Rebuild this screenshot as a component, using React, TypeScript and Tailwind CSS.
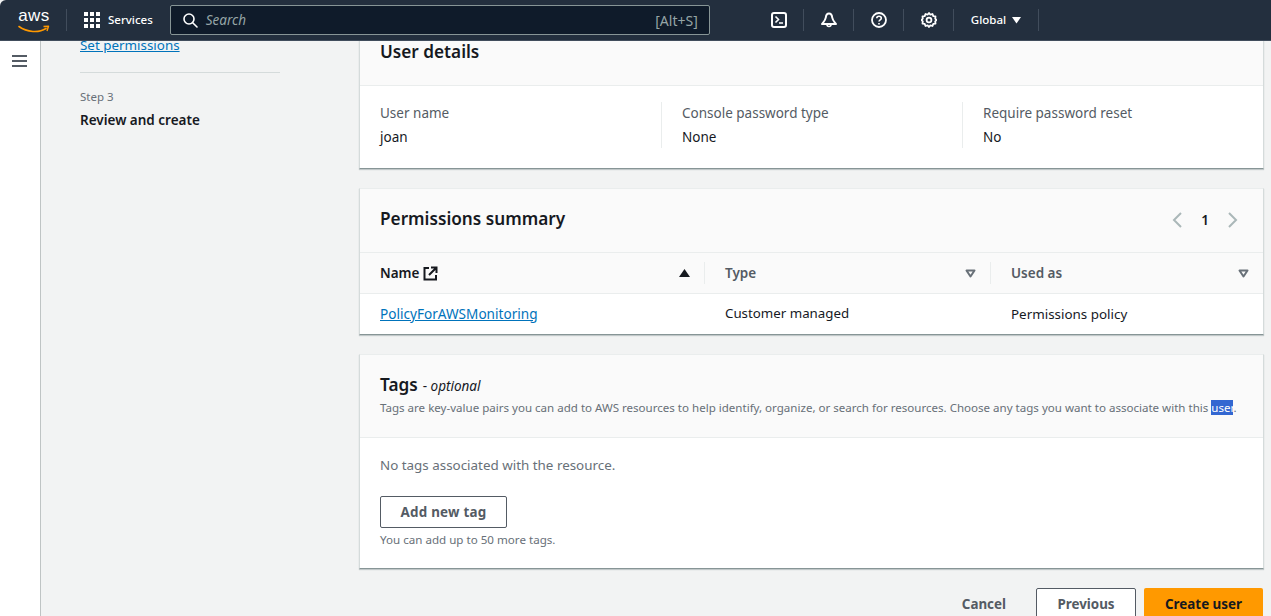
import React from "react";

function Divider() {
  return <div className="h-[22px] w-px bg-[#414d5c]" />;
}

function AwsLogo() {
  return (
    <div className="relative flex h-[30px] w-[32px] flex-col items-center">
      <span className="font-['Liberation_Sans',sans-serif] text-[17px] leading-[20px] tracking-[0.5px] text-white">aws</span>
      <svg width="32" height="9" viewBox="0 0 32 9" className="-mt-[1px]">
        <path d="M1 1.5C9 7.5 21 8 28 3.5" fill="none" stroke="#f90" strokeWidth="1.6" strokeLinecap="round" />
        <path d="M25.5 1.5L30.5 1.2L29 6" fill="none" stroke="#f90" strokeWidth="1.4" strokeLinejoin="round" />
      </svg>
    </div>
  );
}

function GridIcon() {
  return (
    <div className="grid h-4 w-4 grid-cols-3 gap-[1.5px]">
      {Array.from({ length: 9 }).map((_, i) => (
        <div key={i} className="h-[4.3px] w-[4.3px] bg-white" />
      ))}
    </div>
  );
}

function TopNav() {
  return (
    <header className="relative z-10 flex h-[41px] shrink-0 items-center rounded-tl-[6px] border-b border-[#414d5c] bg-[#232f3e] font-['Noto_Sans',sans-serif] text-white">
      <div className="ml-[18px] mr-[16px] mt-[1px]">
        <AwsLogo />
      </div>
      <Divider />
      <div className="ml-[17px] flex items-center gap-2">
        <GridIcon />
        <span className="text-[11.5px] font-medium leading-4">Services</span>
      </div>
      <div className="ml-[17px] flex h-[30px] w-[540px] items-center rounded-[2px] border border-[#879596] bg-[#0f1b2a] pl-[11px] pr-[11px]">
        <svg width="16" height="16" viewBox="0 0 16 16" fill="none" stroke="#fff" strokeWidth="1.6">
          <circle cx="7" cy="7" r="5" />
          <path d="M10.7 10.7L15 15" strokeLinecap="round" />
        </svg>
        <span className="ml-2 text-[13.5px] italic text-[#95a5a6]">Search</span>
        <span className="ml-auto text-[14px] text-[#95a5a6]">[Alt+S]</span>
      </div>
      <div className="ml-[61px] flex h-4 w-4 items-center justify-center">
        <svg width="16" height="16" viewBox="0 0 16 16" fill="none" stroke="#fff" strokeWidth="2">
          <rect x="1" y="1" width="14" height="14" rx="2" />
          <path d="M4.5 4.5L7.5 7.5L4.5 10.5M8 11h4" strokeWidth="1.6" />
        </svg>
      </div>
      <div className="ml-[16px]"><Divider /></div>
      <div className="ml-[17px] flex h-4 w-4 items-center justify-center">
        <svg width="16" height="16" viewBox="0 0 16 16" fill="none" stroke="#fff" strokeWidth="2" strokeLinejoin="round">
          <path d="M8 1.5C5.8 1.5 5 3.5 4.8 5.5C4.5 8 3 9.5 1 12H15C13 9.5 11.5 8 11.2 5.5C11 3.5 10.2 1.5 8 1.5Z" />
          <path d="M6 12.5a2 2 0 0 0 4 0" strokeWidth="1.6" />
        </svg>
      </div>
      <div className="ml-[16px]"><Divider /></div>
      <div className="ml-[17px] flex h-4 w-4 items-center justify-center">
        <svg width="16" height="16" viewBox="0 0 16 16" fill="none" stroke="#fff" strokeWidth="1.8">
          <circle cx="8" cy="8" r="7" />
          <path d="M5.8 6.2C5.8 3.5 10.3 3.5 10.3 6.2C10.3 7.9 8 7.8 8 9.6" strokeWidth="1.6" />
          <path d="M8 11v1.6" strokeWidth="1.6" />
        </svg>
      </div>
      <div className="ml-[16px]"><Divider /></div>
      <div className="ml-[17px] flex h-4 w-4 items-center justify-center">
        <svg width="16" height="16" viewBox="0 0 16 16" fill="none" stroke="#fff" strokeWidth="1.8" strokeLinejoin="round">
          <path d="M8 1L9.4 2.7L11.5 2L12.3 4.1L14.5 4.4L14.2 6.6L15.6 8L14.2 9.4L14.5 11.6L12.3 11.9L11.5 14L9.4 13.3L8 15L6.6 13.3L4.5 14L3.7 11.9L1.5 11.6L1.8 9.4L0.4 8L1.8 6.6L1.5 4.4L3.7 4.1L4.5 2L6.6 2.7Z" />
          <circle cx="8" cy="8" r="2.4" />
        </svg>
      </div>
      <div className="ml-[16px]"><Divider /></div>
      <div className="ml-[17px] flex items-center gap-[6px]">
        <span className="text-[11.5px] font-medium leading-4">Global</span>
        <svg width="9" height="7" viewBox="0 0 9 7" fill="#fff"><path d="M0 0H9L4.5 6.5Z" /></svg>
      </div>
      <div className="ml-[17px]"><Divider /></div>
    </header>
  );
}

function KeyValue({ label, value, className }: { label: string; value: string; className: string }) {
  return (
    <div className={className}>
      <div className="text-[13.5px] leading-[22px] text-[#545b64]">{label}</div>
      <div className="mt-[2px] text-[13.5px] leading-[22px] text-[#16191f]">{value}</div>
    </div>
  );
}

function Card({ children }: { children: React.ReactNode }) {
  return (
    <section className="border border-x-[#d5dbdb] border-t-[#eaeded] border-b-[#879596] bg-white shadow-[0_1px_1px_rgba(0,28,36,0.2)]">
      {children}
    </section>
  );
}

function SortDown() {
  return (
    <svg width="11" height="9" viewBox="0 0 11 9" fill="none" stroke="#687078" strokeWidth="2" strokeLinejoin="round">
      <path d="M1.5 1.5H9.5L5.5 7.5Z" />
    </svg>
  );
}

function UserDetails() {
  return (
    <Card>
      <div className="flex h-[65px] items-end border-b border-[#eaeded] bg-[#fafafa] px-5 pb-[21px]">
        <h2 className="text-[17.2px] font-semibold leading-[24px] text-[#16191f]">User details</h2>
      </div>
      <div className="flex h-[82px] pt-4">
        <div className="flex h-[46px] w-full">
          <KeyValue label="User name" value="joan" className="w-[302px] border-r border-[#eaeded] pl-5" />
          <KeyValue label="Console password type" value="None" className="w-[301px] border-r border-[#eaeded] pl-5" />
          <KeyValue label="Require password reset" value="No" className="flex-1 pl-5" />
        </div>
      </div>
    </Card>
  );
}

function PermissionsSummary() {
  return (
    <Card>
      <div className="flex h-[63px] items-center justify-between bg-[#fafafa] px-5 pb-[4px]">
        <h2 className="text-[17.2px] font-semibold leading-[24px] text-[#16191f]">Permissions summary</h2>
        <div className="flex items-center gap-[18px] pr-[4px] pt-[3px]">
          <svg width="12" height="16" viewBox="0 0 12 16" fill="none" stroke="#aab7b8" strokeWidth="2"><path d="M10 1L3 8L10 15" /></svg>
          <span className="text-[13.5px] font-semibold text-[#16191f]">1</span>
          <svg width="12" height="16" viewBox="0 0 12 16" fill="none" stroke="#aab7b8" strokeWidth="2"><path d="M2 1L9 8L2 15" /></svg>
        </div>
      </div>
      <div className="flex h-[42px] items-center border-y border-[#eaeded] bg-[#fafafa] text-[13.5px] font-semibold">
        <div className="flex h-[22px] w-[345px] items-center border-r border-[#eaeded] pl-5 pr-[14px]">
          <span className="text-[#16191f]">Name</span>
          <svg className="ml-[4px]" width="15" height="15" viewBox="0 0 15 15" fill="none" stroke="#16191f" strokeWidth="2">
            <path d="M6 2H1.5V13.5H13V9" />
            <path d="M8 1.5H13.5V7M13.5 1.5L6 9" />
          </svg>
          <svg className="ml-auto" width="11" height="8" viewBox="0 0 11 8" fill="#16191f"><path d="M5.5 0L11 8H0Z" /></svg>
        </div>
        <div className="flex h-[22px] w-[286px] items-center justify-between border-r border-[#eaeded] pl-5 pr-[14px] text-[#545b64]">
          <span>Type</span>
          <SortDown />
        </div>
        <div className="flex h-[22px] flex-1 items-center justify-between pl-5 pr-[14px] text-[#545b64]">
          <span>Used as</span>
          <SortDown />
        </div>
      </div>
      <div className="flex h-[40px] items-center text-[13.5px] text-[#16191f]">
        <div className="w-[345px] pl-5">
          <a className="text-[13.6px] text-[#0073bb] underline">PolicyForAWSMonitoring</a>
        </div>
        <div className="w-[286px] pl-5 text-[13.3px]">Customer managed</div>
        <div className="flex-1 pl-5 text-[13.4px]">Permissions policy</div>
      </div>
    </Card>
  );
}

function Tags() {
  return (
    <Card>
      <div className="h-[83px] border-b border-[#eaeded] bg-[#fafafa] px-5 pt-[18px]">
        <div className="flex items-baseline leading-[24px]">
          <h2 className="text-[17.2px] font-semibold text-[#16191f]">Tags</h2>
          <span className="ml-[5px] text-[13.5px] text-[#16191f]">- <i>optional</i></span>
        </div>
        <p className="mt-[2px] text-[11.55px] leading-[16px] text-[#687078]">
          Tags are key-value pairs you can add to AWS resources to help identify, organize, or search for resources. Choose any tags you want to associate with this <span className="bg-[#3367d1] text-white">user</span>.
        </p>
      </div>
      <div className="h-[130px] px-5 pt-[16px]">
        <p className="text-[13.4px] leading-[22px] text-[#687078]">No tags associated with the resource.</p>
        <button className="mt-[20px] flex h-[32px] w-[127px] items-center justify-center rounded-[2px] border border-[#545b64] bg-white text-[13.4px] font-bold tracking-[0.25px] text-[#545b64]">
          Add new tag
        </button>
        <p className="mt-[4px] text-[11.6px] leading-[16px] text-[#687078]">You can add up to 50 more tags.</p>
      </div>
    </Card>
  );
}

export default function App() {
  return (
    <div className="flex h-[616px] w-[1271px] flex-col overflow-hidden bg-[#f2f3f3] font-['Noto_Sans',sans-serif]">
      <TopNav />
      <div className="flex min-h-0 flex-1">
        <aside className="flex w-[41px] shrink-0 justify-center border-r border-[#bfc4c4] bg-white pt-[14px]">
          <svg width="15" height="12" viewBox="0 0 15 12" fill="#545b64" className="mr-[1px]">
            <rect width="15" height="2" />
            <rect y="5" width="15" height="2" />
            <rect y="10" width="15" height="2" />
          </svg>
        </aside>
        <nav className="w-[318px] shrink-0 pl-[39px]">
          <a className="-mt-[7px] block text-[13.4px] leading-[22px] text-[#0073bb] underline">Set permissions</a>
          <div className="mt-[16px] w-[200px] border-t border-[#d5dbdb]" />
          <div className="mt-[16px] text-[11.5px] leading-[16px] text-[#687078]">Step 3</div>
          <div className="mt-[4px] text-[13.5px] font-semibold leading-[22px] text-[#16191f]">Review and create</div>
        </nav>
        <main className="-mt-[21px] flex w-[905px] shrink-0 flex-col gap-[19px]">
          <UserDetails />
          <PermissionsSummary />
          <Tags />
          <div className="flex items-center justify-end pr-px">
            <span className="mr-[30px] text-[13.4px] font-bold text-[#545b64]">Cancel</span>
            <button className="mr-2 h-[32px] w-[100px] rounded-[2px] border border-[#545b64] bg-white text-[13.4px] font-bold text-[#545b64]">Previous</button>
            <button className="h-[32px] w-[119px] rounded-[2px] bg-[#ff9900] text-[13.4px] font-bold text-[#16191f]">Create user</button>
          </div>
        </main>
      </div>
    </div>
  );
}
